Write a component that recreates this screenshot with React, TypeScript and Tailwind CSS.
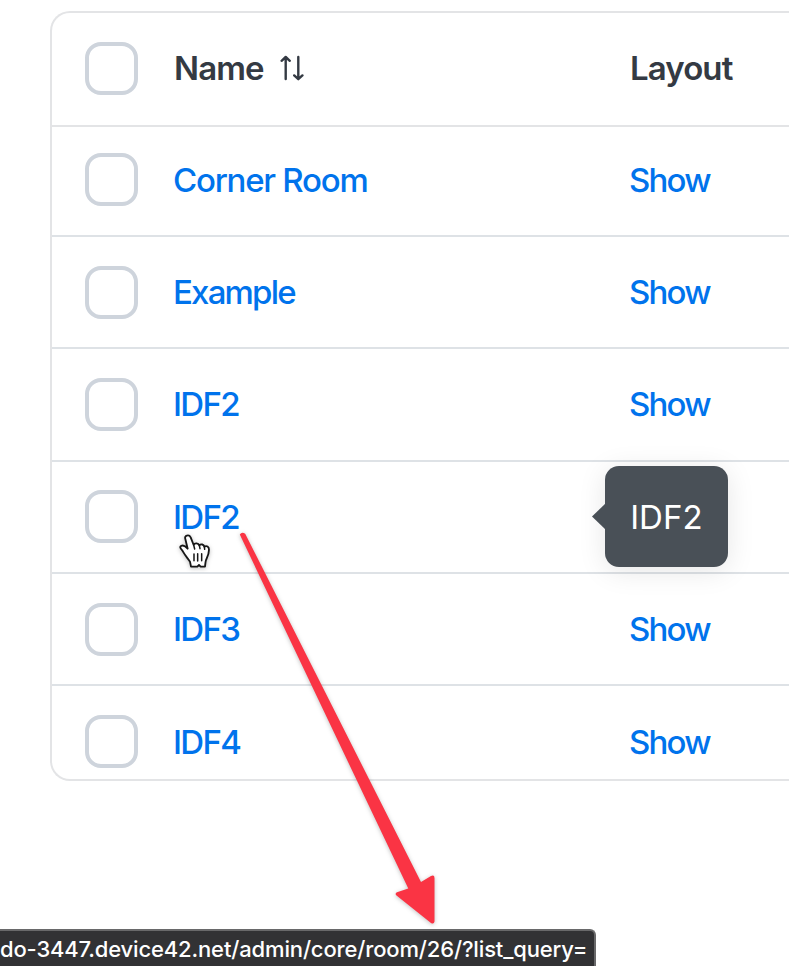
type Row = { name: string; spacing: string; show: boolean; height: string; pad: string; shift: string };

const rows: Row[] = [
  { name: 'Corner Room', spacing: 'tracking-[-1.25px]', show: true, height: 'h-[110px]', pad: 'pt-[26px]', shift: 'pt-px' },
  { name: 'Example', spacing: 'tracking-[-1.8px]', show: true, height: 'h-[112px]', pad: 'pt-[29px]', shift: '' },
  { name: 'IDF2', spacing: 'tracking-[-1.7px]', show: true, height: 'h-[113px]', pad: 'pt-[29px]', shift: '' },
  { name: 'IDF2', spacing: 'tracking-[-1.7px]', show: false, height: 'h-[112px]', pad: 'pt-[28px]', shift: 'pt-px' },
  { name: 'IDF3', spacing: 'tracking-[-1.7px]', show: true, height: 'h-[112px]', pad: 'pt-[29px]', shift: '' },
  { name: 'IDF4', spacing: 'tracking-[-1.7px]', show: true, height: 'h-[93px]', pad: 'pt-[29px]', shift: 'pt-px' },
];

function Checkbox() {
  return <span className="mr-[36px] block size-[53px] shrink-0 rounded-[16px] border-4 border-[#ced4dc]" />;
}

function SortIcon() {
  return (
    <svg className="ml-[16px] mt-[13px] h-[26px] w-[24px] shrink-0" viewBox="0 0 24 26" fill="none" stroke="#343a43" strokeWidth="2.4" strokeLinecap="round" strokeLinejoin="round">
      <path d="M5.7 24V2.3M1.6 5.8 5.7 2l4.1 3.8" />
      <path d="M18.3 2v21.5M14.2 20.4l4.1 3.8 4.1-3.8" />
    </svg>
  );
}

export default function App() {
  return (
    <div className="relative h-[966px] w-[789px] overflow-hidden bg-white font-['Inter',sans-serif] text-[33px] leading-[53px]">
      <div className="flex h-[929px] flex-col pl-[50px] pt-[11px]">
        <div className="h-[770px] overflow-hidden rounded-l-[20px] border-2 border-r-0 border-[#e3e4e6]">
          <div className="flex h-[114px] items-start border-b-2 border-[#e3e4e6] pl-[33px] pt-[29px] font-semibold text-[#343a43]">
            <Checkbox />
            <div className="flex w-[456px] shrink-0">
              <span className="tracking-[-0.9px]">Name</span>
              <SortIcon />
            </div>
            <span className="tracking-[-0.9px]">Layout</span>
          </div>
          {rows.map((row, i) => (
            <div key={i} className={`flex items-start border-[#dee2e6] pl-[33px] font-medium text-[#0073ec] ${row.height} ${row.pad} ${i < rows.length - 1 ? 'border-b-2' : ''}`}>
              <Checkbox />
              <span className={`-ml-px w-[456px] shrink-0 ${row.spacing} ${row.shift}`}>{row.name}</span>
              {row.show && <span className={`tracking-[-1.8px] ${row.shift}`}>Show</span>}
            </div>
          ))}
        </div>
      </div>
      <div className="flex h-[37px] w-[596px] items-center overflow-hidden rounded-tr-[6px] border-r-2 border-t-2 border-[#69696a] bg-[#323234] text-[22px] font-medium leading-[35px] text-white">
        <span className="whitespace-nowrap pt-px tracking-[-0.15px]">do-3447.device42.net/admin/core/room/26/?list_query=</span>
      </div>

      <div className="absolute left-[605px] top-[466px] flex h-[101px] w-[123px] items-center justify-center rounded-[14px] bg-[#495057] text-white shadow-[0_4px_28px_rgba(0,0,0,0.1)]">
        <svg className="absolute -left-[13px] top-[37px] h-[27px] w-[14px]" viewBox="0 0 14 27">
          <path d="M14 0v27L0 13.5z" fill="#495057" />
        </svg>
        <span className="pt-px tracking-[0.1px]">IDF2</span>
      </div>

      <svg className="absolute left-0 top-0 h-[966px] w-[789px] drop-shadow-[0_1px_2px_rgba(0,0,0,0.25)]" viewBox="0 0 789 966">
        <path d="M239.800 534.600q2-3.400 5.400-.8L421 882l10-6q3.500-1.500 3.500 2v43.500q-.5 3-3.500 1.500L396.500 895.500q-2-2 .5-3.200l11.300-3.800Z" fill="#fa3444" />
        <g transform="translate(160 480) scale(.333333)">
          <path d="M76 177c-4-11 11-15 16-5l9 23c3-7 14-6 17 1 5-5 13-3 15 4 7-4 14 0 14 9 0 13-5 22-9 31-2 6-2 13-3 20h-13l-5-5-5 5H93l-3-15c-7-10-15-19-21-30-4-7-12-13-6-17 7-4 15 2 20 8Z" fill="white" stroke="#171717" strokeWidth="5.5" strokeLinejoin="round" />
          <path d="M101 195l3 12M118 196l2 10M133 200l1 8M102 222v20M113 221v22M125 221v21" fill="none" stroke="#171717" strokeWidth="4.5" strokeLinecap="round" />
        </g>
      </svg>
    </div>
  );
}
